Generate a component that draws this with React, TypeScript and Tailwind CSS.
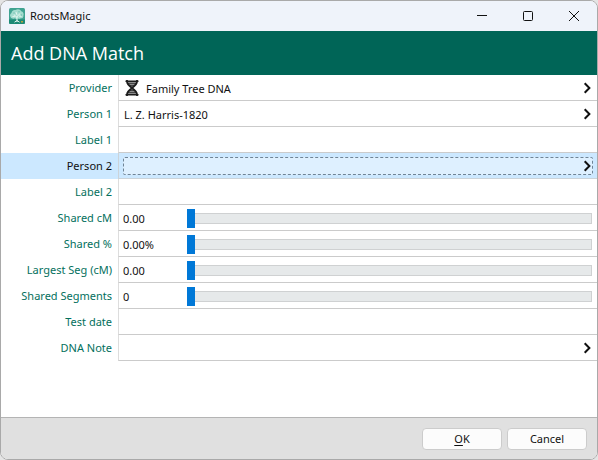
import { useId, useState, type ReactNode } from "react";

function Chevron() {
  return (
    <svg className="h-3 w-2 shrink-0" viewBox="0 0 8 12" fill="none" stroke="#111111" strokeWidth="2">
      <path d="M1.7 1.2 6.4 6 1.7 10.8" />
    </svg>
  );
}

function AppIcon() {
  return (
    <svg className="size-4" viewBox="0 0 16 16">
      <rect width="16" height="16" rx="1.5" fill="#3fa391" />
      <path d="M0 11.500h16v3a1.500 1.500 0 0 1-1.500 1.500h-13A1.500 1.500 0 0 1 0 14.500z" fill="#1d8a76" />
      <path
        d="M1.500 9C.5 7.500 1.200 5.500 2.500 5 2.500 3 4.500 1.500 6.500 2 8.500.6 11.500 1.200 12.200 3.200c2 .4 3 2.600 2.200 4.300.3 1.800-1 3.200-2.700 2.800-1 .9-2.200.6-2.800 0-.8.9-2.200.9-2.900 0-1.500.9-3.800.3-4.500-1.300z"
        fill="#a5dccf"
      />
      <path
        d="M8 14V8M8 9.500 4.800 6.500M8 8.500l3.200-3M8 7 7 4M5.500 14.200 8 12.500l2.500 1.700M3.500 8.500 6 8.200M10 8l2.500.3"
        stroke="#e2f5ef"
        strokeWidth="1"
        fill="none"
      />
      <circle cx="5" cy="5" r=".7" fill="#6fc0b0" />
      <circle cx="10" cy="3.800" r=".7" fill="#6fc0b0" />
      <circle cx="12.500" cy="7" r=".7" fill="#6fc0b0" />
      <rect x="12" y="13" width="2" height="1.500" fill="#b4a33f" />
    </svg>
  );
}

function DnaIcon() {
  return (
    <svg className="h-4 w-4 shrink-0" viewBox="0 0 16 16" fill="none">
      <path d="M3 1.500h10C13 5 10 6.500 8 8 6 6.500 3 5 3 1.500z" fill="#8c8c8c" />
      <path d="M3 14.500h10C13 11 10 9.500 8 8 6 9.500 3 11 3 14.500z" fill="#8c8c8c" />
      <path d="M4 3.500h8M5.500 5.500h5M5.500 10.500h5M4 12.500h8" stroke="#444444" strokeWidth="1" />
      <path
        d="M3 0v1.500C3 7 13 9 13 14.500V16M13 0v1.500C13 7 3 9 3 14.500V16"
        stroke="#1c1c1c"
        strokeWidth="1.800"
      />
      <path d="M1.500 1.200h13M1.500 14.800h13" stroke="#1c1c1c" strokeWidth="1.600" />
    </svg>
  );
}

type RowProps = { label: string; htmlFor: string; selected?: boolean; children: ReactNode };

function Row({ label, htmlFor, selected, children }: RowProps) {
  return (
    <div className={selected ? "flex h-[26px] bg-[#cce8ff]" : "flex h-[26px]"}>
      <label
        htmlFor={htmlFor}
        className={
          selected
            ? "w-[117px] shrink-0 pr-1.5 text-right leading-[26px] text-[#111111]"
            : "w-[117px] shrink-0 pr-1.5 text-right leading-[26px] text-[#04705d]"
        }
      >
        {label}
      </label>
      <div
        className={
          selected
            ? "flex min-w-0 flex-1 items-center border-b border-l border-[#cbd3d9] px-1"
            : "flex min-w-0 flex-1 items-center border-b border-l border-b-[#cbcbcb] border-l-[#dddddd] px-1"
        }
      >
        {children}
      </div>
    </div>
  );
}

function PickerRow({ label, icon, value }: { label: string; icon?: ReactNode; value?: string }) {
  const id = useId();
  return (
    <Row label={label} htmlFor={id}>
      <button id={id} type="button" className="flex h-full w-full items-center justify-between pl-px pr-0.5">
        <span className="flex items-center gap-1.5">
          {icon}
          <span className="pt-0.5">{value}</span>
        </span>
        <Chevron />
      </button>
    </Row>
  );
}

function TextRow({ label }: { label: string }) {
  const id = useId();
  return (
    <Row label={label} htmlFor={id}>
      <input id={id} type="text" className="h-full w-full bg-transparent px-0.5 outline-none" />
    </Row>
  );
}

function SliderRow({ label, digits = 0, unit = "" }: { label: string; digits?: number; unit?: string }) {
  const id = useId();
  const [value, setValue] = useState(0);
  return (
    <Row label={label} htmlFor={id}>
      <div className="flex w-full items-center pt-0.5">
        <output htmlFor={id} className="w-16 shrink-0">
          {value.toFixed(digits)}
          {unit}
        </output>
        <input
          id={id}
          type="range"
          min={0}
          max={100}
          value={value}
          onChange={(e) => setValue(Number(e.target.value))}
          className="mr-px h-5 min-w-0 flex-1 appearance-none bg-transparent outline-none [&::-webkit-slider-runnable-track]:h-[11px] [&::-webkit-slider-runnable-track]:border [&::-webkit-slider-runnable-track]:border-l-0 [&::-webkit-slider-runnable-track]:border-[#cfd1d2] [&::-webkit-slider-runnable-track]:bg-[#e6e9ea] [&::-webkit-slider-thumb]:-mt-[5px] [&::-webkit-slider-thumb]:h-[19px] [&::-webkit-slider-thumb]:w-2 [&::-webkit-slider-thumb]:appearance-none [&::-webkit-slider-thumb]:bg-[#0078d7]"
        />
      </div>
    </Row>
  );
}

export default function App() {
  return (
    <div className="min-h-screen bg-[#e4e4e4] font-['Noto_Sans','Open_Sans',sans-serif] text-[11px] leading-4 text-[#111111]">
      <main className="flex min-h-screen flex-col overflow-hidden rounded-lg border border-[#a9a9a9] bg-white">
        {/* Title bar */}
        <div className="flex h-[30px] shrink-0 items-center justify-between bg-[#eff3fa] pl-2">
          <div className="flex items-center gap-[5px]">
            <AppIcon />
            <span>RootsMagic</span>
          </div>
          <div className="flex h-full">
            <button type="button" aria-label="Minimize" className="flex w-[46px] items-center justify-center">
              <svg className="size-3" viewBox="0 0 12 12" stroke="#111111">
                <path d="M1 5.500h10" />
              </svg>
            </button>
            <button type="button" aria-label="Maximize" className="flex w-[46px] items-center justify-center">
              <svg className="size-3" viewBox="0 0 12 12" fill="none" stroke="#111111">
                <rect x="1.500" y="1.500" width="9" height="9" rx="1" />
              </svg>
            </button>
            <button type="button" aria-label="Close" className="flex w-[46px] items-center justify-center">
              <svg className="size-3" viewBox="0 0 12 12" stroke="#111111">
                <path d="M1 1l10 10M11 1 1 11" />
              </svg>
            </button>
          </div>
        </div>

        {/* Header */}
        <h1 className="flex h-11 shrink-0 items-center bg-[#006557] px-2.5 font-['Open_Sans','Noto_Sans',sans-serif] text-lg text-white">
          Add DNA Match
        </h1>

        {/* Fields */}
        <form className="flex-1">
          <PickerRow label="Provider" icon={<DnaIcon />} value="Family Tree DNA" />
          <PickerRow label="Person 1" value="L. Z. Harris-1820" />
          <TextRow label="Label 1" />
          <Row label="Person 2" htmlFor="person2" selected>
            <button
              id="person2"
              type="button"
              className="flex h-[18px] w-full items-center justify-end rounded-xs border border-dashed border-[#6f8496] bg-[#def0ff] pr-px"
            >
              <Chevron />
            </button>
          </Row>
          <TextRow label="Label 2" />
          <SliderRow label="Shared cM" digits={2} />
          <SliderRow label="Shared %" digits={2} unit="%" />
          <SliderRow label="Largest Seg (cM)" digits={2} />
          <SliderRow label="Shared Segments" />
          <TextRow label="Test date" />
          <PickerRow label="DNA Note" />
        </form>

        {/* Footer */}
        <div className="flex h-[42px] shrink-0 items-center justify-end gap-[5px] border-t border-[#b4b4b4] bg-[#e0e0e0] pr-2.5">
          <button type="button" className="h-[22px] w-20 rounded-sm border border-[#cccccc] bg-[#fcfcfc]">
            <u className="underline-offset-2">O</u>K
          </button>
          <button type="button" className="h-[22px] w-20 rounded-sm border border-[#cccccc] bg-[#fcfcfc]">
            Cancel
          </button>
        </div>
      </main>
    </div>
  );
}
